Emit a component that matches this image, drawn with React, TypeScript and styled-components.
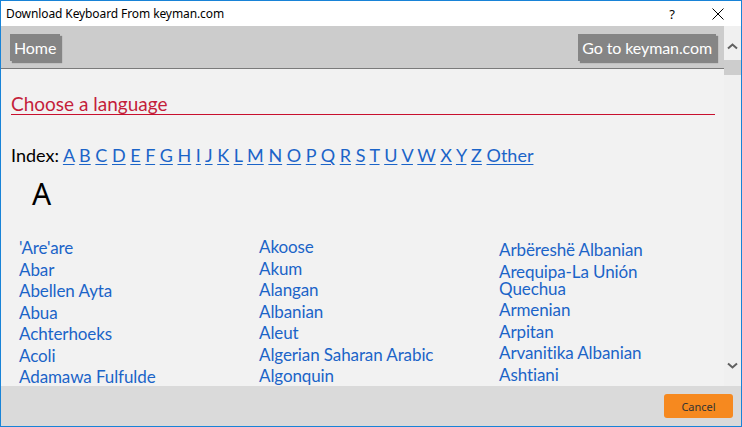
import React from 'react';
import styled, { createGlobalStyle } from 'styled-components';

const GlobalStyle = createGlobalStyle`
  html, body {
    margin: 0;
    padding: 0;
    background: #ffffff;
  }
  * {
    box-sizing: border-box;
  }
`;

const LETTERS = 'ABCDEFGHIJKLMNOPQRSTUVWXYZ'.split('');

const COLUMNS: string[][] = [
  ["'Are'are", 'Abar', 'Abellen Ayta', 'Abua', 'Achterhoeks', 'Acoli', 'Adamawa Fulfulde'],
  ['Akoose', 'Akum', 'Alangan', 'Albanian', 'Aleut', 'Algerian Saharan Arabic', 'Algonquin'],
  ['Arbëreshë Albanian', 'Arequipa-La Unión Quechua', 'Armenian', 'Arpitan', 'Arvanitika Albanian', 'Ashtiani'],
];

const Window = styled.div`
  width: 742px;
  height: 427px;
  border: 1px solid #1883d7;
  display: flex;
  flex-direction: column;
  overflow: hidden;
  background: #ffffff;
`;

/* 창 제목줄 */
const TitleBar = styled.div`
  height: 25px;
  flex: 0 0 auto;
  display: flex;
  align-items: center;
  padding: 0 0 0 5px;
  font-family: 'Noto Sans', 'Liberation Sans', sans-serif;
  font-size: 12px;
  color: #000000;
`;

const TitleText = styled.span`
  flex: 1 1 auto;
  letter-spacing: -0.1px;
`;

const TitleButton = styled.span`
  width: 46px;
  height: 25px;
  display: inline-flex;
  align-items: center;
  justify-content: center;
  font-size: 13px;
  color: #000000;
`;

const Body = styled.div`
  flex: 0 0 360px;
  display: flex;
  min-height: 0;
`;

const Viewport = styled.div`
  flex: 1 1 auto;
  background: #f2f2f2;
  overflow: hidden;
  font-family: Lato, 'Open Sans', sans-serif;
`;

const Toolbar = styled.div`
  height: 43px;
  background: #cccccc;
  border-bottom: 1px solid #7a7a7a;
  display: flex;
  align-items: flex-start;
  justify-content: space-between;
  padding: 8px 8px 0 9px;
`;

const NavButton = styled.span`
  height: 27px;
  display: inline-flex;
  align-items: center;
  padding: 0 4px;
  background: #858585;
  color: #ffffff;
  font-size: 16px;
  letter-spacing: -0.1px;
  box-shadow: 2px 2px 1px rgba(0, 0, 0, 0.35);
`;

const Content = styled.div`
  padding: 0 9px 0 10px;
`;

const Heading = styled.h2`
  margin: 21px 0 0 0;
  height: 25px;
  line-height: 28px;
  font-size: 19px;
  font-weight: 400;
  color: #c41e3a;
  border-bottom: 1px solid #c8102e;
`;

const IndexRow = styled.div`
  margin-top: 29px;
  font-size: 18px;
  line-height: 22px;
  color: #000000;
`;

const IndexLink = styled.a`
  color: #1b64c8;
  text-decoration: underline;
  text-underline-offset: 2px;
`;

const LetterHeading = styled.div`
  margin: 10px 0 0 21px;
  font-family: 'Noto Sans', sans-serif;
  font-size: 30px;
  line-height: 36px;
  color: #000000;
`;

const LangGrid = styled.div`
  margin: 27px 0 0 8px;
  display: grid;
  grid-template-columns: repeat(3, 240px);
`;

const LangColumn = styled.ul<{ $shift: number }>`
  list-style: none;
  margin: ${(p) => p.$shift}px 0 0 0;
  padding: 0;
  display: flex;
  flex-direction: column;
  row-gap: 4.5px;
  max-width: 180px;
`;

const LangItem = styled.li`
  font-size: 17px;
  line-height: 17px;
  letter-spacing: -0.1px;
  color: #1b64c8;
`;

/* 오른쪽 스크롤바 */
const Scrollbar = styled.div`
  flex: 0 0 17px;
  background: #f0f0f0;
  display: flex;
  flex-direction: column;
`;

const ArrowButton = styled.div<{ $down?: boolean }>`
  height: 34px;
  display: flex;
  justify-content: center;
  align-items: ${(p) => (p.$down ? 'flex-start' : 'flex-end')};
  padding: ${(p) => (p.$down ? '10px 0 0 0' : '0 0 10px 0')};
`;

const Thumb = styled.div`
  height: 15px;
  background: #cdcdcd;
`;

const Track = styled.div`
  flex: 1 1 auto;
`;

const Footer = styled.div`
  flex: 1 1 auto;
  background: #dadada;
  display: flex;
  justify-content: flex-end;
  padding: 8px 8px 0 0;
`;

const CancelButton = styled.button.attrs({ type: 'button' })`
  width: 69px;
  height: 24px;
  border: 0;
  border-radius: 3px;
  background: #f6891f;
  color: #333333;
  font-family: 'Noto Sans', 'Liberation Sans', sans-serif;
  font-size: 11px;
  padding: 0;
`;

function Chevron({ down }: { down?: boolean }) {
  return (
    <svg width="11" height="7" viewBox="0 0 11 7">
      <path
        d={down ? 'M1 1.5 L5.5 5.5 L10 1.5' : 'M1 5.5 L5.5 1.5 L10 5.5'}
        fill="none"
        stroke="#606060"
        strokeWidth="2"
      />
    </svg>
  );
}

export default function App() {
  return (
    <>
      <GlobalStyle />
      <Window>
        <TitleBar>
          <TitleText>Download Keyboard From keyman.com</TitleText>
          <TitleButton>?</TitleButton>
          <TitleButton>
            <svg width="12" height="12" viewBox="0 0 12 12">
              <path d="M0.5 0.5 L11.5 11.5 M11.5 0.5 L0.5 11.5" stroke="#000" strokeWidth="1" />
            </svg>
          </TitleButton>
        </TitleBar>

        <Body>
          <Viewport>
            <Toolbar>
              <NavButton>Home</NavButton>
              <NavButton>Go to keyman.com</NavButton>
            </Toolbar>

            <Content>
              <Heading>Choose a language</Heading>

              <IndexRow>
                Index:{' '}
                {LETTERS.map((l) => (
                  <React.Fragment key={l}>
                    <IndexLink>{l}</IndexLink>{' '}
                  </React.Fragment>
                ))}
                <IndexLink>Other</IndexLink>
              </IndexRow>

              <LetterHeading>A</LetterHeading>

              <LangGrid>
                {COLUMNS.map((col, i) => (
                  <LangColumn key={i} $shift={i === 1 ? -1 : i === 2 ? 2 : 0}>
                    {col.map((name) => (
                      <LangItem key={name}>{name}</LangItem>
                    ))}
                  </LangColumn>
                ))}
              </LangGrid>
            </Content>
          </Viewport>

          <Scrollbar>
            <ArrowButton>
              <Chevron />
            </ArrowButton>
            <Thumb />
            <Track />
            <ArrowButton $down>
              <Chevron down />
            </ArrowButton>
          </Scrollbar>
        </Body>

        <Footer>
          <CancelButton>Cancel</CancelButton>
        </Footer>
      </Window>
    </>
  );
}
